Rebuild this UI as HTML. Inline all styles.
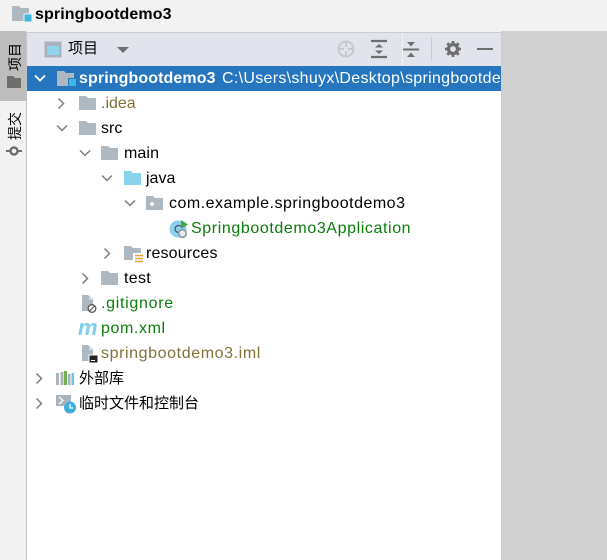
<!DOCTYPE html>
<html><head><meta charset="utf-8">
<style>
html,body{margin:0;padding:0;background:#fff}
body{width:607px;height:560px;position:relative;overflow:hidden;font-family:"Liberation Sans","Noto Sans CJK SC",sans-serif}
.a{position:absolute}
.t{position:absolute;white-space:nowrap;line-height:24px;height:24px;color:#000;font-family:"Liberation Sans","Noto Sans CJK SC",sans-serif;font-size:16px;letter-spacing:.6px}
.c{letter-spacing:0;font-size:15px}
.v{position:absolute;width:20px;line-height:20px;font-size:14px;color:#000;writing-mode:vertical-rl;text-orientation:sideways;transform:rotate(180deg);text-align:center;font-family:"Noto Sans CJK SC",sans-serif;white-space:nowrap}
svg{position:absolute;overflow:visible}
</style></head><body>
<div class="a" style="left:0;top:0;width:607px;height:32px;background:#f2f2f2"></div>
<div class="a" style="left:0;top:32px;width:501px;height:1px;background:#cbcbcb"></div>
<div class="a" style="left:0;top:33px;width:26px;height:527px;background:#f2f2f2"></div>
<div class="a" style="left:0;top:31px;width:26px;height:70px;background:#bdbdbd"></div>
<div class="a" style="left:26px;top:33px;width:1px;height:527px;background:#c4c4c4"></div>
<div class="a" style="left:27px;top:33px;width:474px;height:33px;background:#e1e4ec"></div>
<div class="a" style="left:402px;top:33px;width:1px;height:33px;background:#f2f2f2"></div>
<div class="a" style="left:27px;top:66px;width:474px;height:25px;background:#2675bf"></div>
<div class="a" style="left:501px;top:31px;width:106px;height:529px;background:#d0d0d0"></div>

<!-- title -->
<svg style="left:12px;top:5px" width="20" height="18"><path d="M0 1h7l2 2h8v13H0z" fill="#adb8c0"/><rect x="12" y="9" width="8" height="8" fill="#40b6e0" stroke="#f2f2f2"/></svg>
<div class="t" style="left:35px;top:3px;font-weight:bold;font-size:16px;letter-spacing:.1px">springbootdemo3</div>

<!-- stripe -->
<div class="v" style="left:5px;top:43px;height:28px">项目</div>
<svg style="left:7px;top:76px" width="15" height="13"><path d="M0 0h6l2 2h6v10H0z" fill="#6e6e6e"/></svg>
<div class="v" style="left:5px;top:112px;height:28px">提交</div>
<svg style="left:6px;top:145px" width="16" height="12"><circle cx="8" cy="6" r="3.500" fill="none" stroke="#6e6e6e" stroke-width="2.400"/><path d="M0 6h4M12 6h4" stroke="#6e6e6e" stroke-width="2"/></svg>

<!-- toolbar -->
<svg style="left:44px;top:41px" width="18" height="17"><rect x="0.500" y="0.500" width="17" height="16" fill="#a9b3bc"/><rect x="3" y="5" width="12" height="9" fill="#8fd3ec"/></svg>
<div class="t c" style="left:68px;top:37px">项目</div>
<svg style="left:117px;top:46px" width="13" height="8"><path d="M0 1h12L6 7z" fill="#6e6e6e"/></svg>
<svg style="left:337px;top:40px" width="18" height="18" fill="none" stroke="#c6c8cc" stroke-width="2"><circle cx="9" cy="9" r="7.500"/><path d="M9 2v5M9 11v5M2 9h5M11 9h5"/></svg>
<svg style="left:371px;top:40px" width="16" height="18"><path d="M0 1h16M0 17h16" stroke="#6e6e6e" stroke-width="2.200"/><path d="M4 7.500L8 4l4 3.500zM4 10.500L8 14l4-3.500z" fill="#6e6e6e"/></svg>
<svg style="left:403px;top:41px" width="16" height="17"><path d="M0 8.500h16" stroke="#6e6e6e" stroke-width="2"/><path d="M4 1h8L8 5.500zM4 16h8L8 11.500z" fill="#6e6e6e"/></svg>
<div class="a" style="left:431px;top:37px;width:1px;height:24px;background:#c8cad0"></div>
<svg style="left:445px;top:41px" width="16" height="16"><circle cx="8" cy="8" r="4.500" fill="none" stroke="#6e6e6e" stroke-width="3.200"/><path d="M8 0v3M8 13v3M0 8h3M13 8h3M2.300 2.300l2 2M11.700 11.700l2 2M13.700 2.300l-2 2M4.300 11.700l-2 2" stroke="#6e6e6e" stroke-width="2.800"/></svg>
<div class="a" style="left:477px;top:48px;width:16px;height:2px;background:#6e6e6e"></div>

<!-- arrows -->
<svg style="left:0;top:0;pointer-events:none" width="607" height="560" fill="none" stroke="#7f7f7f" stroke-width="1.500">
<path d="M35 75.500l5 5 5-5" stroke="#fff" stroke-width="1.800"/>
<path d="M58.500 98.500l5 5-5 5"/>
<path d="M57 125.500l5 5 5-5"/>
<path d="M80 150.500l5 5 5-5"/>
<path d="M102 175.500l5 5 5-5"/>
<path d="M125 200.500l5 5 5-5"/>
<path d="M104.500 248.500l5 5-5 5"/>
<path d="M82.500 273.500l5 5-5 5"/>
<path d="M36.500 373.500l5 5-5 5"/>
<path d="M36.500 398.500l5 5-5 5"/>
</svg>

<!-- row icons -->
<svg style="left:57px;top:70px" width="20" height="18"><path d="M0 1h7l2 2h8v13H0z" fill="#adb8c0"/><rect x="11.500" y="8.500" width="8" height="8" fill="#40b6e0" stroke="#2675bf"/></svg>
<svg style="left:79px;top:95px" width="18" height="16"><path d="M0 1h7l2 2h8v12H0z" fill="#adb8c0"/></svg>
<svg style="left:79px;top:120px" width="18" height="16"><path d="M0 1h7l2 2h8v12H0z" fill="#adb8c0"/></svg>
<svg style="left:101px;top:145px" width="18" height="16"><path d="M0 1h7l2 2h8v12H0z" fill="#adb8c0"/></svg>
<svg style="left:124px;top:170px" width="18" height="16"><path d="M0 1h7l2 2h8v12H0z" fill="#8bd3ec"/></svg>
<svg style="left:146px;top:195px" width="18" height="16"><path d="M0 1h7l2 2h8v12H0z" fill="#adb8c0"/><circle cx="6" cy="9" r="2" fill="#fff"/></svg>
<svg style="left:169px;top:219px" width="20" height="20"><circle cx="9" cy="10" r="8.500" fill="#8bd0ec"/><path d="M12 7.500a3.500 3.500 0 1 0 0 5" fill="none" stroke="#4a5560" stroke-width="1.300"/><path d="M12 1l7 4.500-7 4.500z" fill="#45a845"/><circle cx="13.500" cy="14.500" r="3.800" fill="#e6eaee" stroke="#8b98a3" stroke-width="1.600"/></svg>
<svg style="left:124px;top:245px" width="20" height="18"><path d="M0 1h7l2 2h8v12H0z" fill="#adb8c0"/><rect x="9" y="8" width="11" height="10" fill="#fff"/><path d="M11 10.500h8M11 13.500h8M11 16.500h8" stroke="#e8a63c" stroke-width="1.600"/></svg>
<svg style="left:101px;top:270px" width="18" height="16"><path d="M0 1h7l2 2h8v12H0z" fill="#adb8c0"/></svg>
<svg style="left:81px;top:294px" width="17" height="20"><path d="M1 1h6l5 5v11H1z" fill="#adb8c0"/><path d="M8 1l5 5H8z" fill="#d5dade"/><circle cx="11" cy="14.500" r="3.800" fill="#fff" stroke="#555" stroke-width="1.300"/><path d="M8.500 17l5-5" stroke="#555" stroke-width="1.200"/></svg>
<div class="t" style="left:78px;top:316px;font-weight:bold;font-style:italic;font-size:22px;letter-spacing:0;color:#7ccfee">m</div>
<svg style="left:81px;top:344px" width="17" height="20"><path d="M1 1h6l5 5v11H1z" fill="#adb8c0"/><path d="M8 1l5 5H8z" fill="#d5dade"/><rect x="8" y="11" width="9" height="8" fill="#222" stroke="#fff"/><path d="M10 16.500h4" stroke="#fff"/></svg>
<svg style="left:56px;top:371px" width="18" height="15"><rect x="0" y="2" width="3" height="12" fill="#aab4bb"/><rect x="4.500" y="1" width="3" height="13" fill="#aab4bb"/><rect x="8" y="0" width="3" height="14" fill="#6fb24b"/><rect x="12" y="3" width="2.500" height="11" fill="#aab4bb"/><rect x="15.500" y="2" width="2.500" height="12" fill="#6fc3e3"/></svg>
<svg style="left:56px;top:395px" width="20" height="20"><rect x="0" y="0" width="15" height="11" fill="#aab4bb"/><path d="M3 2l4 3.500-4 3.500" stroke="#fff" stroke-width="1.200" fill="none"/><circle cx="14" cy="12.500" r="6" fill="#3daee0"/><path d="M14 9v4h3" stroke="#fff" stroke-width="1.300" fill="none"/></svg>

<!-- row text -->
<div class="t" style="left:79px;top:67px;color:#fff;font-weight:bold;letter-spacing:.1px">springbootdemo3</div>
<div class="t" style="left:222px;top:67px;color:#fff;width:279px;overflow:hidden;letter-spacing:.3px">C:\Users\shuyx\Desktop\springbootdemo3</div>
<div class="t" style="left:101px;top:92px;color:#7f7338;letter-spacing:0">.idea</div>
<div class="t" style="left:101px;top:117px;letter-spacing:0">src</div>
<div class="t" style="left:124px;top:142px;letter-spacing:.1px">main</div>
<div class="t" style="left:146px;top:167px;letter-spacing:0">java</div>
<div class="t" style="left:169px;top:192px;letter-spacing:.49px">com.example.springbootdemo3</div>
<div class="t" style="left:191px;top:217px;color:#0b7d0b">Springbootdemo3Application</div>
<div class="t" style="left:146px;top:242px;letter-spacing:.15px">resources</div>
<div class="t" style="left:124px;top:267px;letter-spacing:.3px">test</div>
<div class="t" style="left:101px;top:292px;color:#0b7d0b;letter-spacing:.7px">.gitignore</div>
<div class="t" style="left:101px;top:317px;color:#0b7d0b">pom.xml</div>
<div class="t" style="left:101px;top:342px;color:#7f7338">springbootdemo3.iml</div>
<div class="t c" style="left:79px;top:367px">外部库</div>
<div class="t c" style="left:79px;top:392px">临时文件和控制台</div>
</body></html>
